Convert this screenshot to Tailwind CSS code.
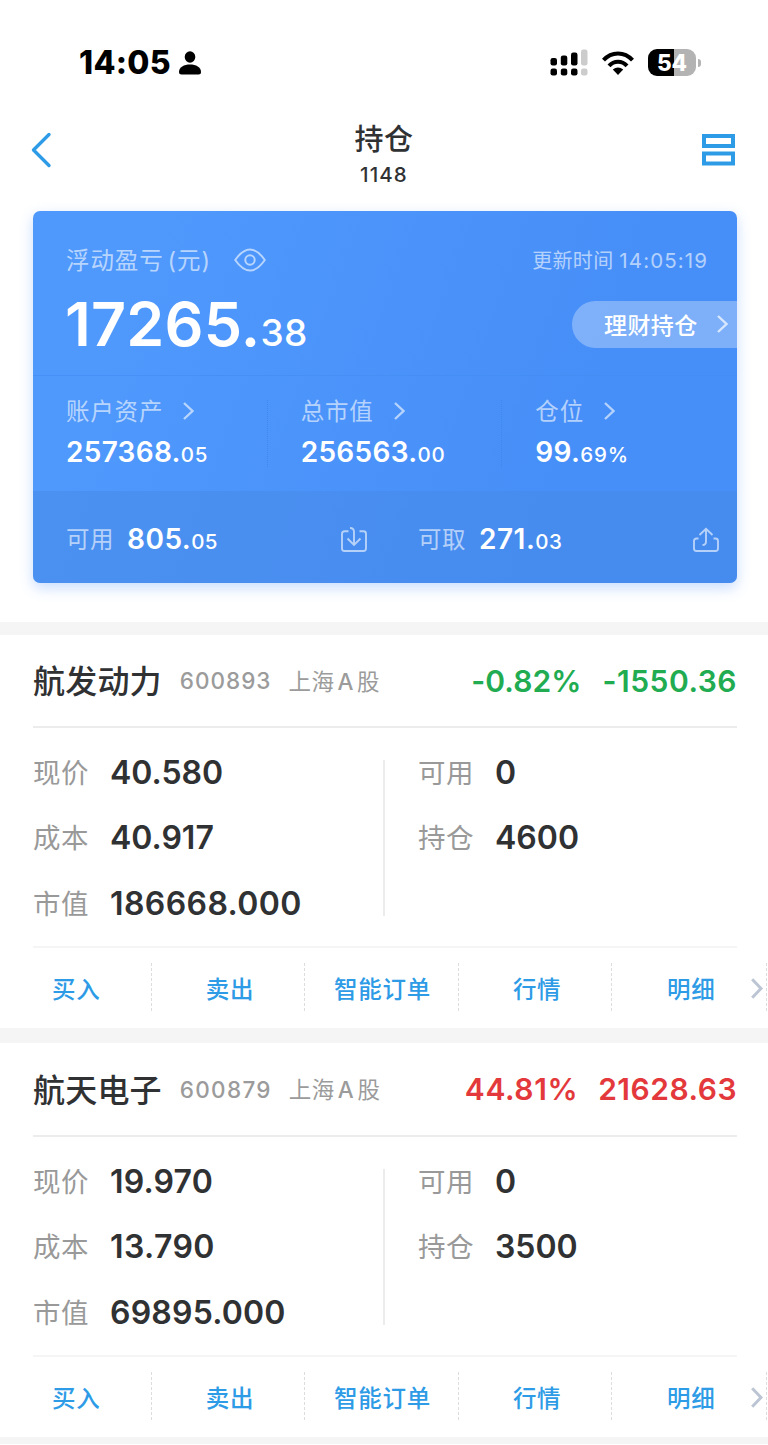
<!DOCTYPE html>
<html lang="zh-CN">
<head>
  <meta charset="UTF-8">
  <meta name="viewport" content="width=device-width, initial-scale=1.0">
  <title>持仓</title>
  <script src="https://cdn.jsdelivr.net/npm/@tailwindcss/browser@4"></script>
</head>
<body class="w-[768px] h-[1445px] overflow-hidden bg-white font-['Inter','Noto_Sans_CJK_SC',sans-serif] text-[#303133] leading-none whitespace-nowrap">
  <!-- Status bar -->
  <div class="flex items-center justify-between h-[125px] pl-[79px] pr-[68px]">
    <div class="flex items-center gap-2 text-black">
      <span class="text-[32px] font-extrabold tracking-[0.3px]">14:05</span>
      <svg class="w-[22px] h-[24px]" viewBox="0 0 22 24" fill="currentColor">
        <ellipse cx="11" cy="6" rx="5.3" ry="5.8"/>
        <path d="M0 21C0 16 5 13.5 11 13.5S22 16 22 21Q22 23.5 19.5 23.5H2.5Q0 23.5 0 21Z"/>
      </svg>
    </div>
    <div class="flex items-center">
      <svg class="w-[38px] h-[27px]" viewBox="0 0 38 27">
        <rect x="0.5" y="9" width="6.5" height="7.5" rx="2.2"/>
        <rect x="10.8" y="6.5" width="6.5" height="10" rx="2.2"/>
        <rect x="21" y="3.5" width="6.5" height="13" rx="2.2"/>
        <rect x="31" y="0.5" width="6.5" height="16" rx="2.2" fill="#ccc"/>
        <rect x="0.5" y="19.5" width="6.5" height="7" rx="2.2"/>
        <rect x="10.8" y="19.5" width="6.5" height="7" rx="2.2"/>
        <rect x="21" y="19.5" width="6.5" height="7" rx="2.2"/>
        <rect x="31" y="19.5" width="6.5" height="7" rx="2.2" fill="#ccc"/>
      </svg>
      <svg class="w-[32px] h-[24px] ml-[14px]" viewBox="0 0 32 24" fill="none" stroke="#000" stroke-width="4">
        <path d="M1.5 9.2C9.5 0.3 22.5 0.3 30.5 9.2"/>
        <path d="M7 14.8C12 9.3 20 9.3 25 14.8"/>
        <path d="M16 24L10.8 18.6C14 15.8 18 15.8 21.2 18.6Z" fill="#000" stroke="none"/>
      </svg>
      <div class="flex items-center justify-center w-[48px] h-[27px] pt-[1px] ml-[14px] rounded-[9px] bg-linear-to-r from-black from-54% to-[#b3b3b3] to-54% text-[22.5px] font-extrabold text-white">54</div>
      <div class="w-[3px] h-[8px] ml-[2px] -mr-px rounded-r-full bg-[#b3b3b3]"></div>
    </div>
  </div>

  <!-- Title bar -->
  <div class="flex justify-between h-[86px] pl-[31px] pr-[33px]">
    <svg class="w-[21px] h-[36px] mt-[7px]" viewBox="0 0 21 36" fill="none" stroke="#2e9be6" stroke-width="3.4" stroke-linecap="round" stroke-linejoin="round">
      <path d="M18 2.5L2.5 18L18 33.5"/>
    </svg>
    <div class="flex flex-col items-center pl-[14px]">
      <div class="text-[29px] font-medium tracking-[0.5px]">持仓</div>
      <div class="mt-[11px] text-[20.5px] font-medium tracking-[1.1px]">1148</div>
    </div>
    <svg class="w-[33px] h-[32px] mt-[9px]" viewBox="0 0 33 32" fill="none" stroke="#2e9be6" stroke-width="4">
      <rect x="2" y="2" width="29" height="10"/>
      <rect x="2" y="19.5" width="29" height="10"/>
    </svg>
  </div>

  <!-- Account card -->
  <div class="flex flex-col w-[704px] h-[372px] ml-[33px] rounded-[7px] overflow-hidden bg-linear-[110deg] from-[#4f98fc] from-15% to-[#478ff8] to-75% text-white shadow-[0_5px_14px_rgba(74,144,250,0.3)]">
    <div class="h-[165px] pl-[33px] border-b border-[#438cf2]/60">
      <div class="flex items-center h-[98px] pr-[29px] text-white/60">
        <span class="pt-[2px] text-[23.5px] tracking-[0.9px] [word-spacing:-3.5px]">浮动盈亏 (元)</span>
        <svg class="w-[32px] h-[24px] ml-[23px]" viewBox="0 0 32 24" fill="none" stroke="currentColor" stroke-width="2">
          <path d="M1.2 12C4 8 9 1.5 16 1.5S28 8 30.8 12C28 16 23 22.5 16 22.5S4 16 1.2 12Z" stroke-linejoin="round"/>
          <circle cx="16" cy="12" r="4.7"/>
        </svg>
        <span class="ml-auto pt-[2px] text-[20px] tracking-[0.3px]">更新时间 <span class="text-[20.5px] tracking-[1.1px]">14:05:19</span></span>
      </div>
      <div class="flex items-center justify-between -mt-[15px]">
        <div class="-ml-px text-[61px] font-semibold tracking-[0.2px]">17265.<span class="text-[37px] font-[550]">38</span></div>
        <div class="flex items-center w-[165px] h-[47px] pt-[3px] pl-[32px] rounded-l-full bg-white/30 text-[23px] font-medium tracking-[0.4px]">
          理财持仓
          <svg class="w-[11px] h-[18px] ml-[19px] -mt-[4px]" viewBox="0 0 11 18" fill="none" stroke="#fff" stroke-opacity="0.7" stroke-width="2.4"><path d="M1 1L9.5 9L1 17"/></svg>
        </div>
      </div>
    </div>

    <div class="grid grid-cols-3 h-[115px] pt-[24px]">
      <div class="h-[67px] pl-[33px] border-r border-dotted border-[#3f88ee]">
        <div class="flex items-center text-[23.5px] tracking-[0.8px] text-white/60">
          账户资产
          <svg class="w-[11px] h-[18px] ml-[20px] -mt-[2px]" viewBox="0 0 11 18" fill="none" stroke="currentColor" stroke-width="2.4"><path d="M1 1L9.5 9L1 17"/></svg>
        </div>
        <div class="mt-[14px] text-[28px] font-semibold tracking-[0.3px]">257368.<span class="text-[20.5px] font-medium tracking-[0.8px]">05</span></div>
      </div>
      <div class="h-[67px] pl-[33px] border-r border-dotted border-[#3f88ee]">
        <div class="flex items-center text-[23.5px] tracking-[0.8px] text-white/60">
          总市值
          <svg class="w-[11px] h-[18px] ml-[20px] -mt-[2px]" viewBox="0 0 11 18" fill="none" stroke="currentColor" stroke-width="2.4"><path d="M1 1L9.5 9L1 17"/></svg>
        </div>
        <div class="mt-[14px] text-[28px] font-semibold tracking-[0.3px]">256563.<span class="text-[20.5px] font-medium tracking-[0.8px]">00</span></div>
      </div>
      <div class="h-[67px] pl-[33px]">
        <div class="flex items-center text-[23.5px] tracking-[0.8px] text-white/60">
          仓位
          <svg class="w-[11px] h-[18px] ml-[20px] -mt-[2px]" viewBox="0 0 11 18" fill="none" stroke="currentColor" stroke-width="2.4"><path d="M1 1L9.5 9L1 17"/></svg>
        </div>
        <div class="mt-[14px] text-[28px] font-semibold tracking-[0.3px]">99.<span class="text-[20.5px] font-medium tracking-[0.8px]">69%</span></div>
      </div>
    </div>

    <div class="grid grid-cols-2 h-[92px] bg-[#4686e0]/40">
      <div class="flex items-center pt-[4px] pl-[33px] pr-[18px]">
        <span class="pt-[2px] text-[23.5px] tracking-[0.5px] text-white/60">可用</span>
        <span class="ml-[13px] text-[28px] font-semibold tracking-[0.5px]">805.<span class="text-[20.5px] font-medium tracking-[0.3px]">05</span></span>
        <svg class="w-[26px] h-[25px] ml-auto" viewBox="0 0 26 25" fill="none" stroke="#fff" stroke-opacity="0.6" stroke-width="1.9">
          <path d="M7.5 4.2H3.5Q1 4.2 1 6.7V21.5Q1 24 3.5 24H22.5Q25 24 25 21.5V6.7Q25 4.2 22.5 4.2H18.5"/>
          <path d="M9 1Q13 1 13 5V17.5M6.5 11.5L13 18L19.5 11.5"/>
        </svg>
      </div>
      <div class="flex items-center pt-[4px] pl-[33px] pr-[18px]">
        <span class="pt-[2px] text-[23.5px] tracking-[0.5px] text-white/60">可取</span>
        <span class="ml-[13px] text-[28px] font-semibold tracking-[0.5px]">271.<span class="text-[20.5px] font-medium tracking-[0.3px]">03</span></span>
        <svg class="w-[26px] h-[25px] ml-auto" viewBox="0 0 26 25" fill="none" stroke="#fff" stroke-opacity="0.6" stroke-width="1.9">
          <path d="M5.5 11.5H3.5Q1 11.5 1 14V21.5Q1 24 3.5 24H22.5Q25 24 25 21.5V14Q25 11.5 22.5 11.5H20.5"/>
          <path d="M6.5 8L13 1.7L19.5 8M13 2V14.5Q13 18 9.5 18"/>
        </svg>
      </div>
    </div>
  </div>

  <!-- Holding: 600893 -->
  <div class="mt-[39px] border-t-[13px] border-[#f5f5f5]">
    <div class="flex items-center h-[93px] ml-[33px] mr-[31px] border-b-2 border-[#ececec]">
      <span class="pt-[3px] text-[32px] font-medium tracking-[0.2px]">航发动力</span>
      <span class="ml-[18px] pt-[2px] text-[22.5px] font-medium tracking-[1px] text-[#9b9b9b]">600893</span>
      <span class="ml-[17px] pt-[3px] text-[22.5px] tracking-[0.4px] [word-spacing:-3.5px] text-[#9b9b9b]">上海 <span class="font-medium">A</span> 股</span>
      <span class="ml-auto text-[30px] font-[560] tracking-[0.1px] text-[#22ac52]">-0.82%</span>
      <span class="ml-[21px] text-[30px] font-[560] tracking-[0.5px] text-[#22ac52]">-1550.36</span>
    </div>
    <div class="grid grid-cols-2 h-[220px] ml-[33px] mr-[31px] py-[32px] border-b-2 border-[#f5f5f5]">
      <div class="flex flex-col justify-between h-[156px] border-r-2 border-[#ececec]">
        <div class="flex items-center h-[25px]"><span class="w-[77px] pt-[2px] text-[27.5px] tracking-[0.5px] text-[#999]">现价</span><span class="text-[32px] font-semibold">40.580</span></div>
        <div class="flex items-center h-[25px]"><span class="w-[77px] pt-[2px] text-[27.5px] tracking-[0.5px] text-[#999]">成本</span><span class="text-[32px] font-semibold">40.917</span></div>
        <div class="flex items-center h-[25px]"><span class="w-[77px] pt-[2px] text-[27.5px] tracking-[0.5px] text-[#999]">市值</span><span class="text-[32px] font-semibold tracking-[0.4px]">186668.000</span></div>
      </div>
      <div class="flex flex-col gap-[40.5px] h-[156px] pl-[33px]">
        <div class="flex items-center h-[25px]"><span class="w-[77px] pt-[2px] text-[27.5px] tracking-[0.5px] text-[#999]">可用</span><span class="text-[32px] font-semibold">0</span></div>
        <div class="flex items-center h-[25px]"><span class="w-[77px] pt-[2px] text-[27.5px] tracking-[0.5px] text-[#999]">持仓</span><span class="text-[32px] font-semibold">4600</span></div>
      </div>
    </div>
    <div class="relative grid grid-cols-5 h-[80px] pt-[15px] pb-[17px] text-center text-[23.5px] leading-[54px] font-medium tracking-[0.7px] text-[#2e9be6]">
      <span class="h-[48px] mr-[2px] pl-[2px] border-r border-dashed border-[#ddd]">买入</span>
      <span class="h-[48px] mr-[2px] pl-[2px] border-r border-dashed border-[#ddd]">卖出</span>
      <span class="h-[48px] mr-[2px] border-r border-dashed border-[#ddd]">智能订单</span>
      <span class="h-[48px] mr-[2px] pl-[2px] border-r border-dashed border-[#ddd]">行情</span>
      <span class="h-[48px] mr-px pl-[2px] border-r border-dashed border-[#ddd]">明细</span>
      <svg class="absolute right-[5px] top-[30px] w-[12px] h-[21px]" viewBox="0 0 12 21" fill="none" stroke="#bcc5d3" stroke-width="3"><path d="M1.2 1.2L10 10.5L1.2 19.8"/></svg>
    </div>
  </div>

  <!-- Holding: 600879 -->
  <div class="border-t-[15px] border-[#f5f5f5]">
    <div class="flex items-center h-[94px] ml-[33px] mr-[31px] border-b-2 border-[#ececec]">
      <span class="pt-[3px] text-[32px] font-medium tracking-[0.2px]">航天电子</span>
      <span class="ml-[18px] pt-[2px] text-[22.5px] font-medium tracking-[1.3px] text-[#9b9b9b]">600879</span>
      <span class="ml-[17px] pt-[3px] text-[22.5px] tracking-[0.4px] [word-spacing:-3.5px] text-[#9b9b9b]">上海 <span class="font-medium">A</span> 股</span>
      <span class="ml-auto text-[30px] font-[560] tracking-[0.6px] text-[#e4393c]">44.81%</span>
      <span class="ml-[20px] text-[30px] font-[560] tracking-[0.5px] text-[#e4393c]">21628.63</span>
    </div>
    <div class="grid grid-cols-2 h-[220px] ml-[33px] mr-[31px] py-[32px] border-b-2 border-[#f5f5f5]">
      <div class="flex flex-col justify-between h-[156px] border-r-2 border-[#ececec]">
        <div class="flex items-center h-[25px]"><span class="w-[77px] pt-[2px] text-[27.5px] tracking-[0.5px] text-[#999]">现价</span><span class="text-[32px] font-semibold tracking-[0.2px]">19.970</span></div>
        <div class="flex items-center h-[25px]"><span class="w-[77px] pt-[2px] text-[27.5px] tracking-[0.5px] text-[#999]">成本</span><span class="text-[32px] font-semibold tracking-[0.4px]">13.790</span></div>
        <div class="flex items-center h-[25px]"><span class="w-[77px] pt-[2px] text-[27.5px] tracking-[0.5px] text-[#999]">市值</span><span class="text-[32px] font-semibold tracking-[0.2px]">69895.000</span></div>
      </div>
      <div class="flex flex-col gap-[40.5px] h-[156px] pl-[33px]">
        <div class="flex items-center h-[25px]"><span class="w-[77px] pt-[2px] text-[27.5px] tracking-[0.5px] text-[#999]">可用</span><span class="text-[32px] font-semibold">0</span></div>
        <div class="flex items-center h-[25px]"><span class="w-[77px] pt-[2px] text-[27.5px] tracking-[0.5px] text-[#999]">持仓</span><span class="text-[32px] font-semibold">3500</span></div>
      </div>
    </div>
    <div class="relative grid grid-cols-5 h-[80px] pt-[15px] pb-[17px] text-center text-[23.5px] leading-[54px] font-medium tracking-[0.7px] text-[#2e9be6]">
      <span class="h-[48px] mr-[2px] pl-[2px] border-r border-dashed border-[#ddd]">买入</span>
      <span class="h-[48px] mr-[2px] pl-[2px] border-r border-dashed border-[#ddd]">卖出</span>
      <span class="h-[48px] mr-[2px] border-r border-dashed border-[#ddd]">智能订单</span>
      <span class="h-[48px] mr-[2px] pl-[2px] border-r border-dashed border-[#ddd]">行情</span>
      <span class="h-[48px] mr-px pl-[2px] border-r border-dashed border-[#ddd]">明细</span>
      <svg class="absolute right-[5px] top-[30px] w-[12px] h-[21px]" viewBox="0 0 12 21" fill="none" stroke="#bcc5d3" stroke-width="3"><path d="M1.2 1.2L10 10.5L1.2 19.8"/></svg>
    </div>
  </div>
  <div class="h-[7px] bg-[#f5f5f5]"></div>
</body>
</html>
